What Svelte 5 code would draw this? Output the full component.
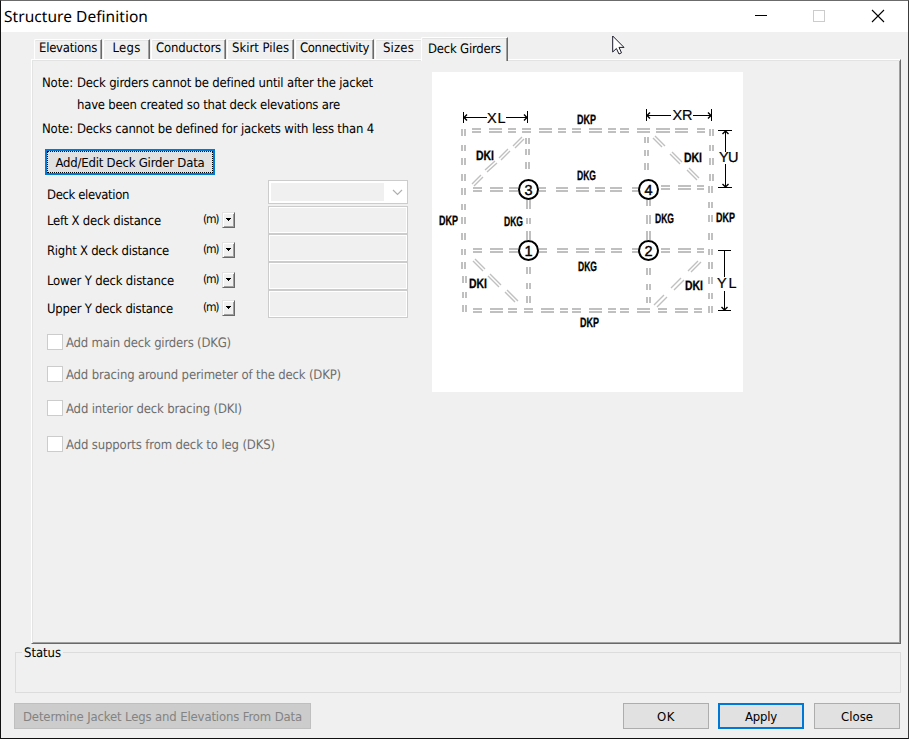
<script>
  // Spreads letters so that a label occupies its nominal dialog width.
  function fit(node, width) {
    const natural = node.getBoundingClientRect().width;
    node.style.letterSpacing = `${(width - natural) / node.textContent.length}px`;
  }

  const tabs = [
    { name: 'Elevations', w: 68, t: 58 },
    { name: 'Legs', w: 47, t: 28 },
    { name: 'Conductors', w: 75, t: 65 },
    { name: 'Skirt Piles', w: 67, t: 57 },
    { name: 'Connectivity', w: 79, t: 69 },
    { name: 'Sizes', w: 46, t: 31 },
    { name: 'Deck Girders', w: 87, t: 73, active: true },
  ];

  const distances = [
    { label: 'Left X deck distance', w: 114 },
    { label: 'Right X deck distance', w: 122 },
    { label: 'Lower Y deck distance', w: 127 },
    { label: 'Upper Y deck distance', w: 126 },
  ];

  const options = [
    { label: 'Add main deck girders (DKG)', w: 165 },
    { label: 'Add bracing around perimeter of the deck (DKP)', w: 275 },
    { label: 'Add interior deck bracing (DKI)', w: 176 },
    { label: 'Add supports from deck to leg (DKS)', w: 209 },
  ];

  // Horizontal girders: top edge and the [start, end] of each dash.
  const rows = [
    [128, [[472,481],[489,502],[508,516],[522,531],[539,552],[558,566],[572,581],[589,602],[608,616],[620,629],[637,650],[656,670],[675,688],[697,705]]],
    [187, [[473,482],[490,503],[509,518],[539,546],[556,568],[576,589],[595,605],[610,622],[632,639]]],
    [185, [[661,670],[678,691],[697,704]]],
    [248, [[473,482],[490,503],[509,518],[539,547],[557,568],[576,589],[595,605],[611,622],[632,639],[661,670],[678,691],[697,704]]],
    [308, [[473,482],[490,503],[508,517],[524,533],[541,554],[560,568],[572,581],[589,602],[608,616],[620,629],[637,650],[658,667],[675,688],[694,702]]],
  ];

  // Vertical girders: left edge and dashes.
  const cols = [
    [461, [[129,136],[145,151],[158,165],[174,181],[188,195],[204,210],[217,224],[233,240],[249,255],[262,269]]],
    [462, [[276,283],[292,298],[305,312]]],
    [525, [[138,144],[149,155],[162,169]]],
    [526, [[199,209],[218,224],[231,240],[267,274],[283,289],[296,303]]],
    [644, [[137,143],[150,156],[163,170]]],
    [646, [[199,206],[215,224],[231,240],[268,275],[284,290],[297,303]]],
    [709, [[129,136],[145,151],[158,165],[174,181]]],
    [708, [[186,193],[202,208],[215,222],[233,240],[249,255],[262,269],[277,284],[293,299],[306,313]]],
  ];

  const bars = [
    ...rows.flatMap(([y, d]) => d.flatMap(([a, b]) => [0, 3].map((o) => `M${a} ${y + o}H${b}v2H${a}z`))),
    ...cols.flatMap(([x, d]) => d.flatMap(([a, b]) => [0, 3].map((o) => `M${x + o} ${a}V${b}h2V${a}z`))),
  ].join('');

  const braces = [
    [513,146,522,137],[515,148,524,139],[499,158,508,149],[501,160,510,151],
    [485,170,495,161],[487,172,497,163],[472,184,481,175],[474,186,483,177],
    [653,138,662,147],[655,136,665,146],[670,154,680,164],[672,152,682,162],
    [687,170,697,180],[689,168,699,178],[473,261,483,271],[475,259,485,269],
    [488,276,499,287],[490,274,501,285],[505,292,515,302],[507,290,518,301],
    [688,271,698,261],[691,272,701,262],[671,288,681,278],[674,290,684,280],
    [654,305,664,295],[657,307,667,297],
  ].map(([a, b, c, d]) => `M${a} ${b}L${c} ${d}`).join('');

  const members = [
    ['DKP', 577, 124], ['DKG', 577, 180], ['DKI', 476, 160], ['DKI', 684, 162],
    ['DKP', 439, 225], ['DKG', 504, 226], ['DKG', 655, 223], ['DKP', 716, 222],
    ['DKG', 578, 271], ['DKI', 469, 288], ['DKI', 685, 290], ['DKP', 580, 327],
  ];

  const legs = [[1, 528.5, 250.5], [2, 648.5, 250.5], [3, 528.5, 189.5], [4, 648.5, 189.5]];

  // Dimension captions: one x position per letter.
  const dims = [['XL', '487 497.5', 123], ['XR', '672.5 682', 120], ['YU', '719 728', 162], ['YL', '717 728.5', 288]];
</script>

<div class="window">
  <header>
    <h1><span use:fit={144}>Structure Definition</span></h1>
    <svg class="controls" width="131" height="14" viewBox="0 0 131 14" shape-rendering="crispEdges">
      <path d="M1 6.5H13" stroke="#000" fill="none" />
      <rect x="59.5" y="1.5" width="11" height="11" stroke="#ccc" fill="none" />
      <path d="M118 1L130 13M130 1L118 13" stroke="#000" stroke-width="1.1" fill="none" shape-rendering="auto" />
    </svg>
  </header>

  <nav>
    {#each tabs as tab}
      <div class="tab" class:active={tab.active} style:width="{tab.w}px">
        <span use:fit={tab.t}>{tab.name}</span>
      </div>
    {/each}
  </nav>

  <main>
    <section class="form">
      <div class="note"><span class="tag"><span use:fit={31}>Note:</span></span><span use:fit={296}>Deck girders cannot be defined until after the jacket</span></div>
      <div class="note indent"><span use:fit={263}>have been created so that deck elevations are</span></div>
      <div class="note"><span class="tag"><span use:fit={31}>Note:</span></span><span use:fit={297}>Decks cannot be defined for jackets with less than 4</span></div>

      <button class="edit"><span use:fit={149}>Add/Edit Deck Girder Data</span></button>

      <div class="fields">
        <div class="labels">
          <div class="row"><span use:fit={82}>Deck elevation</span></div>
          {#each distances as d}
            <div class="row">
              <span class="name"><span use:fit={d.w}>{d.label}</span></span>
              <span class="unit">(m)</span>
              <span class="drop"><svg width="5" height="3" viewBox="0 0 5 3" shape-rendering="crispEdges"><path d="M0 0H5V1H4V2H3V3H2V2H1V1H0z" /></svg></span>
            </div>
          {/each}
        </div>
        <div class="inputs">
          <div class="combo">
            <div class="value"></div>
            <svg width="11" height="7" viewBox="0 0 11 7"><path d="M1 1L5.5 5.5L10 1" fill="none" stroke="#b0b0b0" stroke-width="1.2" /></svg>
          </div>
          {#each distances as _}<div class="input"></div>{/each}
        </div>
      </div>

      <div class="options">
        {#each options as o}
          <div class="option"><i></i><span use:fit={o.w}>{o.label}</span></div>
        {/each}
      </div>
    </section>

    <svg class="diagram" width="311" height="320" viewBox="432 72 311 320">
      <rect x="432" y="72" width="311" height="320" fill="#fff" />
      <path d={bars} fill="#c0c0c0" shape-rendering="crispEdges" />
      <path d={braces} stroke="#c0c0c0" stroke-width="1.4" fill="none" />
      <g stroke="#000" fill="none" shape-rendering="crispEdges">
        <path d="M463.5 112V123M527.5 111V123M464 117.5H487M506 117.5H527M646.5 109V121M711.5 109V121M647 115.5H671M693 115.5H711" />
        <path d="M718 130.5H732M718 187.5H732M725.5 131V152M725.5 164V187M718 250.5H731M718 310.5H731M724.5 251V277M724.5 291V310" />
      </g>
      <path
        d="M467 114.5L464 117.5L467 120.5M524 114.5L527 117.5L524 120.5M650 112.5L647 115.5L650 118.5M708 112.5L711 115.5L708 118.5M722.5 134L725.5 131L728.5 134M722.5 184L725.5 187L728.5 184M721.5 307L724.5 310L727.5 307"
        stroke="#000" stroke-width="1.4" fill="none" />
      {#each legs as [n, x, y]}
        <circle cx={x} cy={y} r="9.5" fill="#fff" stroke="#000" stroke-width="2" />
        <text class="leg" {x} y={y + 5}>{n}</text>
      {/each}
      {#each members as [t, x, y]}
        <text class="member" {x} {y} textLength={t === 'DKI' ? 18 : 19} lengthAdjust="spacingAndGlyphs">{t}</text>
      {/each}
      {#each dims as [t, x, y]}
        <text class="dim" {x} {y}>{t}</text>
      {/each}
    </svg>
  </main>

  <div class="status"><span><b use:fit={37}>Status</b></span></div>

  <footer>
    <button class="wide" disabled><span use:fit={279}>Determine Jacket Legs and Elevations From Data</span></button>
    <button class="ok"><span use:fit={18}>OK</span></button>
    <button class="apply"><span use:fit={32}>Apply</span></button>
    <button><span use:fit={32}>Close</span></button>
  </footer>

  <svg class="cursor" width="13" height="20" viewBox="0 0 13 20">
    <path d="M.7 1V17L4.4 13.5L7 19L9.5 17.8L7 12.4H12z" fill="#fff" stroke="#1a1a2a" stroke-width="1" />
  </svg>
</div>

<style>
  .window {
    position: relative;
    box-sizing: border-box;
    width: 909px;
    height: 739px;
    border: 1px solid #111;
    border-top-color: #6b6b6b;
    border-right-color: #3c3c3c;
    background: #f0f0f0;
    color: #000;
    font: 13px/20px 'DejaVu Sans Condensed', 'Noto Sans', sans-serif;
    overflow: hidden;
    white-space: nowrap;
    text-rendering: geometricPrecision;
  }
  svg { display: block; flex: none; }
  header {
    display: flex;
    justify-content: space-between;
    height: 31px;
    background: #fff;
  }
  h1 {
    margin: 5px 0 0 3px;
    font: 400 15.5px/20px 'Noto Sans', 'Open Sans', sans-serif;
  }
  .controls { margin: 8px 23px 0 0; }
  nav {
    display: flex;
    align-items: flex-end;
    gap: 1px;
    height: 27px;
    padding-left: 33px;
    line-height: 18px;
  }
  .tab {
    box-sizing: border-box;
    flex: none;
    height: 20px;
    border-top: 1px solid #fff;
    border-left: 1px solid #fff;
    border-right: 1px solid #696969;
    border-top-left-radius: 2px;
    box-shadow: inset -1px 0 #a0a0a0, inset 0 1px #e3e3e3;
    text-align: center;
  }
  .tab:nth-child(6) { border-right: 0; box-shadow: inset 0 1px #e3e3e3; }
  .tab.active {
    position: relative;
    height: 24px;
    margin: 0 0 -2px -1px;
    padding-top: 3px;
    background: #f0f0f0;
  }
  main {
    box-sizing: border-box;
    display: flex;
    width: 870px;
    height: 585px;
    margin-left: 30px;
    border: 1px solid;
    border-color: #fff #696969 #696969 #fff;
    box-shadow: inset 1px 1px #e3e3e3, inset -1px -1px #a0a0a0;
  }
  .form { box-sizing: border-box; width: 400px; padding: 14px 0 0 10px; }
  .note { display: flex; height: 16px; margin-bottom: 8px; }
  .note:first-child { margin-bottom: 6px; }
  .tag { width: 35px; }
  .indent { padding-left: 35px; }
  button {
    box-sizing: border-box;
    display: flex;
    align-items: center;
    justify-content: center;
    width: 86px;
    height: 26px;
    padding: 2px 0 0;
    border: 1px solid #adadad;
    background: #e1e1e1;
    color: #000;
    font: inherit;
  }
  .edit {
    width: 170px;
    margin: 13px 0 0 3px;
    border: 2px solid #0078d7;
    outline: 1px dotted #000;
    outline-offset: -3px;
  }
  .fields { display: flex; padding: 5px 0 0 5px; }
  .labels { width: 221px; padding-top: 6px; }
  .row { display: flex; height: 16px; margin-bottom: 14px; }
  .row:first-child { margin-bottom: 10px; }
  .row:nth-child(4) { margin-bottom: 12px; }
  .name { width: 156px; }
  .unit {
    width: 19px;
    font: 12px/15px 'DejaVu Sans Condensed', sans-serif;
    letter-spacing: -1.3px;
  }
  .drop {
    box-sizing: border-box;
    display: flex;
    align-items: center;
    justify-content: center;
    width: 13px;
    height: 16px;
    border: 1px solid;
    border-color: #e3e3e3 #696969 #696969 #e3e3e3;
    box-shadow: inset 1px 1px #fff, inset -1px -1px #a0a0a0;
  }
  .drop svg { margin-bottom: 1px; }
  .inputs { width: 140px; }
  .combo {
    box-sizing: border-box;
    display: flex;
    align-items: center;
    height: 24px;
    margin-bottom: 2px;
    padding: 2px;
    border: 1px solid #ccc;
    background: #fff;
  }
  .value { width: 113px; height: 18px; margin-right: 8px; background: #f0f0f0; }
  .input {
    box-sizing: border-box;
    height: 28px;
    border: 1px solid #ccc;
    box-shadow: inset 0 0 0 1px #fff;
  }
  .options { padding: 4px 0 0 5px; }
  .option {
    display: flex;
    height: 16px;
    margin-bottom: 16px;
    color: #6d6d6d;
  }
  .option:nth-child(2) { margin-bottom: 18px; }
  .option:nth-child(3) { margin-bottom: 20px; }
  .option i {
    box-sizing: border-box;
    width: 16px;
    height: 16px;
    margin-right: 3px;
    border: 1px solid #ccc;
    background: #fff;
  }
  .diagram { margin-top: 12px; overflow: visible; }
  .member { font: bold 13.5px 'Liberation Sans', sans-serif; stroke: #000; stroke-width: .3; }
  .dim { font: 14.5px 'Liberation Sans', sans-serif; stroke: #000; stroke-width: .2; }
  .leg { font: 14.5px 'Liberation Sans', sans-serif; text-anchor: middle; stroke: #000; stroke-width: .4; }
  .status {
    box-sizing: border-box;
    width: 886px;
    height: 41px;
    margin: 8px 0 0 14px;
    border: 1px solid #dcdcdc;
  }
  .status span {
    display: block;
    box-sizing: border-box;
    width: 41px;
    height: 16px;
    margin: -9px 0 0 6px;
    padding-left: 2px;
    background: #f0f0f0;
  }
  .status b { font-weight: 400; }
  footer {
    display: flex;
    padding: 10px 0 0 13px;
  }
  .wide {
    width: 297px;
    border-color: #bfbfbf;
    background: #ccc;
    color: #838383;
  }
  .ok { margin-left: 312px; }
  .apply { margin: 0 10px 0 9px; border: 2px solid #0078d7; }
  .cursor { position: absolute; left: 611px; top: 34px; }
</style>
